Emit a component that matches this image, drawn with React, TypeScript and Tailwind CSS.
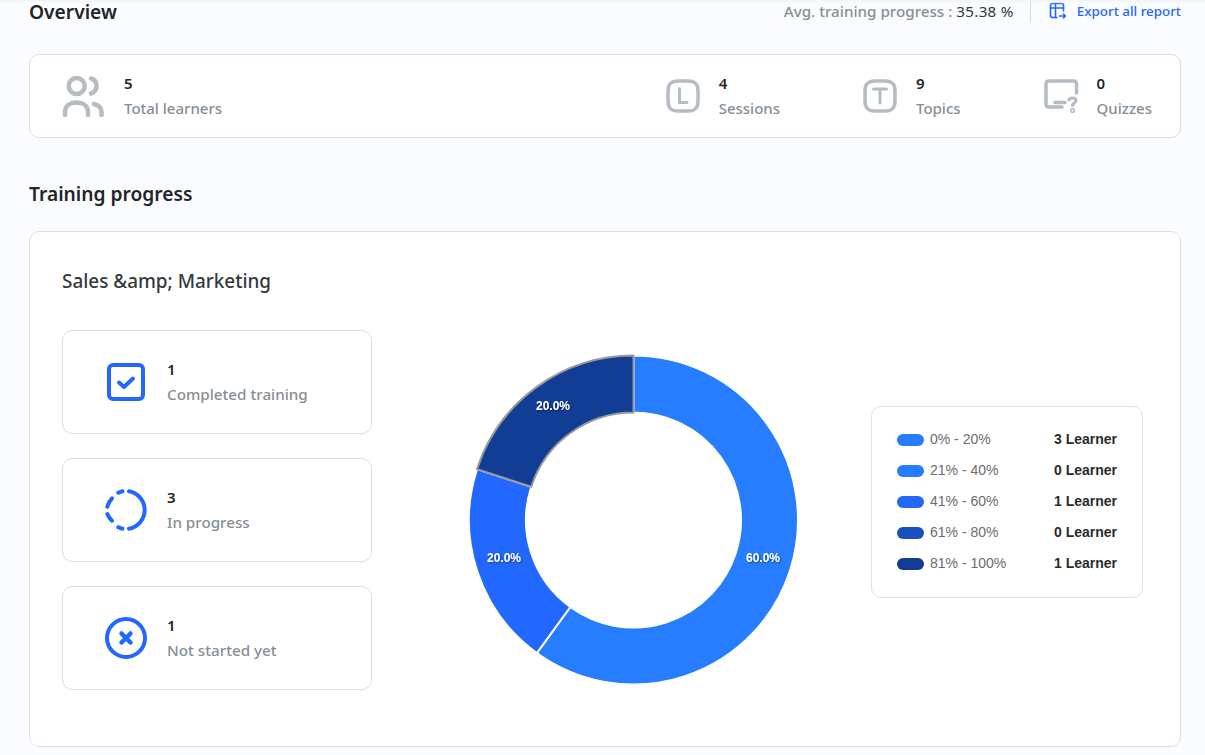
const sans = "font-['Noto_Sans',sans-serif]";

function arc(cx: number, cy: number, ro: number, ri: number, a0: number, a1: number) {
  const p = (r: number, a: number) => {
    const t = (a * Math.PI) / 180;
    return `${(cx + r * Math.sin(t)).toFixed(2)} ${(cy - r * Math.cos(t)).toFixed(2)}`;
  };
  const large = a1 - a0 > 180 ? 1 : 0;
  return `M${p(ro, a0)} A${ro} ${ro} 0 ${large} 1 ${p(ro, a1)} L${p(ri, a1)} A${ri} ${ri} 0 ${large} 0 ${p(ri, a0)} Z`;
}

function UsersIcon() {
  return (
    <svg width="42" height="42" viewBox="0 0 42 42" fill="none" stroke="#b4bcc4" strokeWidth="4.500" strokeLinecap="round">
      <circle cx="14.700" cy="11" r="8" />
      <path d="M29 3.500c3.500 1 5.500 4 5.500 7.500s-2 6.300-5.500 7.500" />
      <path d="M3 40v-3c0-6 5-9.500 11.500-9.500S26 31 26 37v3" />
      <path d="M32 29c4 1 7.500 3.500 7.500 8v3" />
    </svg>
  );
}

function LetterIcon({ l }: { l: "L" | "T" }) {
  return (
    <svg width="34" height="34" viewBox="0 0 34 34" fill="none" stroke="#b4bcc4" strokeWidth="3.500" strokeLinecap="round" strokeLinejoin="round">
      <path d="M12 2h10c7 0 10 3 10 10v10c0 7-3 10-10 10H12C5 32 2 29 2 22V12C2 5 5 2 12 2Z" />
      {l === "L" ? <path d="M13.500 9.500v14h7.500" strokeWidth="3" /> : <path d="M10.500 10h13M17 10v14" strokeWidth="3" />}
    </svg>
  );
}

function QuizIcon() {
  return (
    <svg width="36" height="36" viewBox="0 0 36 36" fill="none" stroke="#b4bcc4" strokeWidth="3.500" strokeLinecap="round" strokeLinejoin="round">
      <path d="M32.500 15V6c0-2-1-3-3-3H5C3 3 2 4 2 6v20c0 2 1 3 3 3h13" />
      <path d="M11 24.500h10" />
      <path d="M25 22c.5-2.500 6.500-3 7 .5.300 2.500-3.500 2.500-3.500 5" strokeWidth="3.200" />
      <circle cx="28.500" cy="32.500" r="0.800" />
    </svg>
  );
}

function ExportIcon() {
  return (
    <svg width="18" height="18" viewBox="0 0 18 18" fill="none" stroke="#2268ff" strokeWidth="1.600" strokeLinecap="round" strokeLinejoin="round">
      <path d="M8 15.500H3.500c-1.300 0-2-.7-2-2v-10c0-1.300.7-2 2-2h9c1.300 0 2 .7 2 2V9" />
      <path d="M1.500 6h13M6.500 1.500v14" />
      <path d="M10.500 14h6M14.500 12l2 2-2 2" />
    </svg>
  );
}

function CheckIcon() {
  return (
    <svg width="38" height="38" viewBox="0 0 38 38" fill="none" stroke="#2268ff" strokeLinecap="round" strokeLinejoin="round" className="ml-[2px]">
      <rect x="2" y="2" width="34" height="34" rx="4" strokeWidth="4" />
      <path d="M12 19.500l5 4.500 9-8.500" strokeWidth="4" />
    </svg>
  );
}

function DashIcon() {
  return (
    <svg width="42" height="42" viewBox="0 0 42 42" fill="none" stroke="#2268ff" strokeWidth="4" strokeLinecap="round">
      <path d="M24 2.300A19 19 0 0 1 24 39.700" />
      <path d="M17.500 2.300A19 19 0 0 0 13.300 3.700" />
      <path d="M7 9.300A19 19 0 0 0 2.300 17.700" />
      <path d="M2.300 25A19 19 0 0 0 7 31.700" />
      <path d="M13.300 38.300A19 19 0 0 0 17.500 39.700" />
    </svg>
  );
}

function XIcon() {
  return (
    <svg width="42" height="42" viewBox="0 0 42 42" fill="none" stroke="#2268ff" strokeLinecap="round">
      <circle cx="21" cy="21" r="19" strokeWidth="4" />
      <path d="M16.500 16.500l9 9M25.500 16.500l-9 9" strokeWidth="4.500" />
    </svg>
  );
}

function Stat({ icon, n, label, w }: { icon: React.ReactNode; n: number; label: string; w: string }) {
  return (
    <div className="flex items-center">
      <div className={`${w} flex shrink-0`}>{icon}</div>
      <div className="flex flex-col pb-[2px]">
        <div className="text-[15px] leading-[20px] font-semibold text-[#212529]">{n}</div>
        <div className="text-[15px] leading-[20px] mt-[5px] font-medium text-[#868e96]">{label}</div>
      </div>
    </div>
  );
}

function StatusCard({ icon, n, label }: { icon: React.ReactNode; n: number; label: string }) {
  return (
    <div className="h-[104px] rounded-[10px] border border-[#dcdcea] flex items-center pl-[42px]">
      <div className="w-[62px] flex shrink-0">{icon}</div>
      <div className="flex flex-col pb-[2px]">
        <div className="text-[15px] leading-[20px] font-semibold text-[#212529]">{n}</div>
        <div className="text-[15.200px] leading-[20px] mt-[5px] font-medium text-[#868e96]">{label}</div>
      </div>
    </div>
  );
}

const legend = [
  ["#277dff", "0% - 20%", "3 Learner"],
  ["#277dff", "21% - 40%", "0 Learner"],
  ["#2268f5", "41% - 60%", "1 Learner"],
  ["#1a4fc0", "61% - 80%", "0 Learner"],
  ["#113d94", "81% - 100%", "1 Learner"],
];

export default function App() {
  const cx = 165.5;
  const cy = 166;
  return (
    <div className={`${sans} w-[1205px] h-[755px] overflow-hidden bg-[#fbfcff] relative`}>
      <div className="absolute top-0 left-0 right-0 h-[4px] bg-gradient-to-b from-[#f3f4f8] to-transparent" />
      <div className="pl-[29px] pr-[24px]">
        <div className="flex items-start justify-between h-[54px]">
          <h2 className="text-[19.200px] leading-[24px] font-semibold text-[#212529]">Overview</h2>
          <div className="flex items-start">
            <div className="text-[15.200px] leading-[22px] font-medium text-[#868e96]">
              Avg. training progress : <span className="text-[#343a40] font-normal tracking-[0.3px]">35.38 %</span>
            </div>
            <div className="w-px h-[23px] bg-[#d5dae3] ml-[16px] mr-[18px]" />
            <a className="flex items-center gap-[10px] text-[13.400px] leading-[22px] font-medium text-[#2268ff]">
              <ExportIcon />
              Export all report
            </a>
          </div>
        </div>
        <div className="h-[84px] rounded-[10px] border border-[#dcdcea] bg-white flex items-center justify-between pl-[32px] pr-[28px]">
          <Stat icon={<UsersIcon />} n={5} label="Total learners" w="w-[62px]" />
          <div className="flex items-center gap-[83px]">
            <Stat icon={<LetterIcon l="L" />} n={4} label="Sessions" w="w-[53px]" />
            <Stat icon={<LetterIcon l="T" />} n={9} label="Topics" w="w-[53px]" />
            <Stat icon={<QuizIcon />} n={0} label="Quizzes" w="w-[53px]" />
          </div>
        </div>
        <h2 className="mt-[44px] text-[19.200px] leading-[24px] font-semibold text-[#212529]">Training progress</h2>
        <div className="mt-[25px] h-[516px] rounded-[10px] border border-[#dcdcea] bg-white pl-[32px] pt-[36px]">
          <div className="text-[18.900px] leading-[26px] font-medium text-[#343a40]">Sales &amp;amp; Marketing</div>
          <div className="flex mt-[36px]">
            <div className="w-[310px] flex flex-col gap-[24px] shrink-0">
              <StatusCard icon={<CheckIcon />} n={1} label="Completed training" />
              <StatusCard icon={<DashIcon />} n={3} label="In progress" />
              <StatusCard icon={<XIcon />} n={1} label="Not started yet" />
            </div>
            <div className="ml-[96px] mt-[24px] w-[332px] h-[332px] shrink-0">
              <svg width="332" height="332" viewBox="0 0 332 332" className="font-['Liberation_Sans',sans-serif]">
                <defs>
                  <filter id="ts" x="-20%" y="-20%" width="140%" height="140%">
                    <feDropShadow dx="1" dy="1" stdDeviation="1" floodColor="#000" floodOpacity="0.45" />
                  </filter>
                </defs>
                <path d={arc(cx, cy, 164.5, 107.5, 0, 216)} fill="#277dff" stroke="#fff" strokeWidth="2" />
                <path d={arc(cx, cy, 164.5, 107.5, 216, 288)} fill="#2268ff" stroke="#fff" strokeWidth="2" />
                <path d={arc(cx, cy, 164.5, 107.5, 288, 360)} fill="#113d94" stroke="#999" strokeWidth="2" />
                <g fill="#fff" fontSize="12" fontWeight="700" textAnchor="middle" filter="url(#ts)">
                  <text x="295" y="208">60.0%</text>
                  <text x="36" y="208">20.0%</text>
                  <text x="85" y="56">20.0%</text>
                </g>
              </svg>
            </div>
            <div className="ml-[71px] mt-[76px] w-[272px] h-[192px] rounded-[10px] border border-[#e0e0e0] bg-white pl-[25px] pr-[25px] pt-[17px] shrink-0 font-['Liberation_Sans',sans-serif]">
              {legend.map(([col, range, count]) => (
                <div key={range} className="flex items-center h-[31px]">
                  <div className="w-[27px] h-[12px] rounded-[6px] shrink-0" style={{ background: col }} />
                  <div className="ml-[6px] text-[14px] text-[#6c6c6c]">{range}</div>
                  <div className="ml-auto text-[14px] font-bold text-[#2b2b2b]">{count}</div>
                </div>
              ))}
            </div>
          </div>
        </div>
      </div>
    </div>
  );
}
